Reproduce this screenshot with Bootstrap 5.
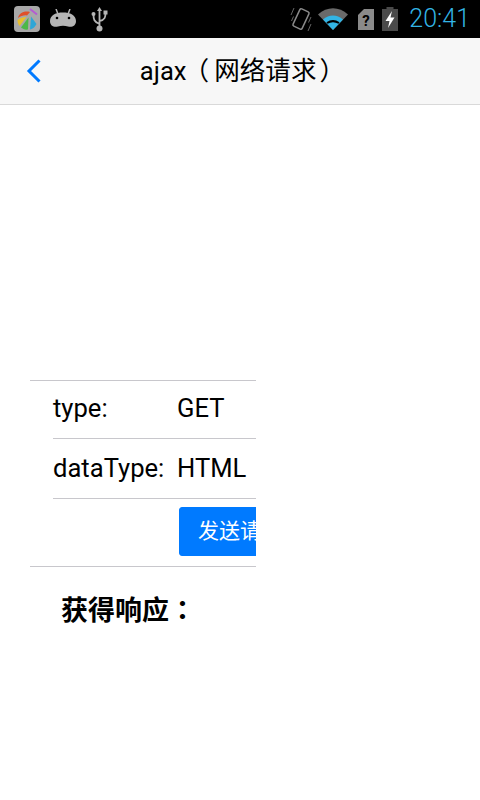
<!DOCTYPE html>
<html lang="zh"><head><meta charset="utf-8">
<link href="https://cdn.jsdelivr.net/npm/bootstrap@5.3.0/dist/css/bootstrap.min.css" rel="stylesheet">
<style>
html,body{height:800px;overflow:hidden;background:#fff}
body{font-family:Roboto,"Noto Sans CJK SC",sans-serif;color:#000}
.punc{font-family:"Noto Sans CJK TC",sans-serif;line-height:0}
.pl{margin:0 5px 0 -3px}
.pr{margin:0 -5px 0 3px}
.sbar{height:38px;background:#000;padding:0 10px 0 14px}
.sclock{font-family:Roboto,sans-serif;font-size:25px;line-height:38px;color:#33b5e5;font-weight:300;margin-left:11px}
.hdr{height:67px;background:#f7f7f7;border-bottom:1px solid #d9d9d9;padding-left:26px}
.hdr-title{font-size:25.600px;line-height:30px;left:0;right:0;top:18px;text-align:center}
.panel{margin:275px 0 0 30px;width:226px;overflow:hidden;border-top:1px solid #c8c7cc;border-bottom:1px solid #c8c7cc}
.line{margin-left:23px;font-size:25.600px}
.line1{height:58px;border-bottom:1px solid #c8c7cc;padding-bottom:3px}
.line2{height:60px;border-bottom:1px solid #c8c7cc;padding-bottom:1px}
.line3{height:67px;padding-top:8px}
.lbl{width:124px;flex:none}
.send{width:150px;height:49px;flex:none;background:#007aff;border:1px solid #007aff;border-radius:3px;color:#fff;font-size:21px;padding:0 0 0 18px;text-align:left;margin-left:2px}
.resp{font-size:27px;font-weight:700;line-height:30px;margin:29px 0 0 61px}
</style></head><body>
<div class="sbar d-flex align-items-center">
<svg width="26" height="26" viewBox="0 0 26 26"><rect width="26" height="26" rx="4" fill="#a8a8a8"/><path d="M4 12C5 7 10 4.500 16 6L13 9.500C10 9 7 10 4 12Z" fill="#e0502a"/><path d="M3.500 14C6 12 9 11 12.500 11L5.500 20C4 18 3.500 16 3.500 14Z" fill="#e9bf2c"/><path d="M7 21.500 14.500 11.500 14 23.500C11 24 9 23 7 21.500Z" fill="#4cb848"/><path d="M16 23.500 17 10.500 22.500 18C21 21 19 23 16 23.500Z" fill="#2fa6d6"/><path d="M16 3 23 8.500" stroke="#b45cd2" stroke-width="2"/></svg>
<svg style="margin-left:10px" width="26" height="20" viewBox="0 0 26 20"><path d="M6 0 8 5M20 0 18 5" stroke="#b5b5b5" stroke-width="1.500"/><path d="M0 12C0 6 6 3.500 13 3.500S26 6 26 12C26 17 22 18.500 18 17.500 15 16.500 11 16.500 8 17.500 4 18.500 0 17 0 12Z" fill="#b5b5b5"/><circle cx="7" cy="9" r="1.300" fill="#000"/><circle cx="19" cy="9" r="1.300" fill="#000"/></svg>
<svg style="margin-left:15px" width="17" height="25" viewBox="0 0 17 25"><path d="M8.500 3V20M8.500 17C3 15 2.500 12 2.500 8M8.500 14C14 13 14.500 10 14.500 6" stroke="#b5b5b5" stroke-width="1.800" fill="none"/><circle cx="8.500" cy="21.500" r="3" fill="#b5b5b5"/><path d="M8.500 0 6 4H11Z" fill="#b5b5b5"/><circle cx="2.500" cy="7" r="2" fill="#b5b5b5"/><rect x="12.500" y="3.500" width="4" height="4" fill="#b5b5b5"/></svg>
<div class="ms-auto d-flex align-items-center">
<svg width="22" height="26" viewBox="0 0 22 26"><rect x="6" y="3.500" width="10" height="19" rx="1.500" transform="rotate(25 11 13)" fill="none" stroke="#8a8a8a" stroke-width="1.500"/><path d="M1 9 4 2M1.500 15 3.500 10.500M21 11 18.500 16.500M21 18 18 25" stroke="#666" stroke-width="1"/></svg>
<svg style="margin-left:6px" width="30" height="22" viewBox="0 0 30 22"><path d="M0 6.500C9-2 21-2 30 6.500L15 22Z" fill="#6a6a6a"/><path d="M5 11.500C11 6 19 6 25 11.500L15 22Z" fill="#33b5e5"/><path d="M9 15C13 12.500 17 12.500 21 15" stroke="#000" stroke-width="2" fill="none"/></svg>
<svg style="margin-left:10px" width="16" height="21" viewBox="0 0 16 21"><path d="M0 6 6 0H16V21H0Z" fill="#8a8a8a"/><text x="8" y="17" font-family="Roboto" font-weight="700" font-size="15" text-anchor="middle" fill="#000">?</text></svg>
<svg style="margin-left:8px" width="16" height="24" viewBox="0 0 16 24"><path d="M4.500 0H11.500V2H16V24H0V2H4.500Z" fill="#4a4a4a"/><path d="M10 4 3.500 14H7.500L6 21 12.500 10.500H8.500Z" fill="#fff"/></svg>
<span class="sclock">20:41</span>
</div></div>
<div class="hdr position-relative d-flex align-items-center">
<svg width="16" height="26" viewBox="0 0 16 26"><path d="M13.500 2.500 3 13 13.500 23.500" fill="none" stroke="#007aff" stroke-width="3"/></svg>
<div class="hdr-title position-absolute">ajax<span class="punc pl" lang="zh-TW">（</span>网络请求<span class="punc pr" lang="zh-TW">）</span></div>
</div>
<div class="panel">
<div class="line line1 d-flex align-items-center"><span class="lbl">type:</span><span>GET</span></div>
<div class="line line2 d-flex align-items-center"><span class="lbl">dataType:</span><span>HTML</span></div>
<div class="line line3 d-flex align-items-start"><span class="lbl"></span><button class="btn send" type="button">发送请求</button></div>
</div>
<div class="resp">获得响应<span class="punc" lang="zh-TW">：</span></div>
<script src="https://cdn.jsdelivr.net/npm/bootstrap@5.3.0/dist/js/bootstrap.bundle.min.js"></script>
</body></html>
